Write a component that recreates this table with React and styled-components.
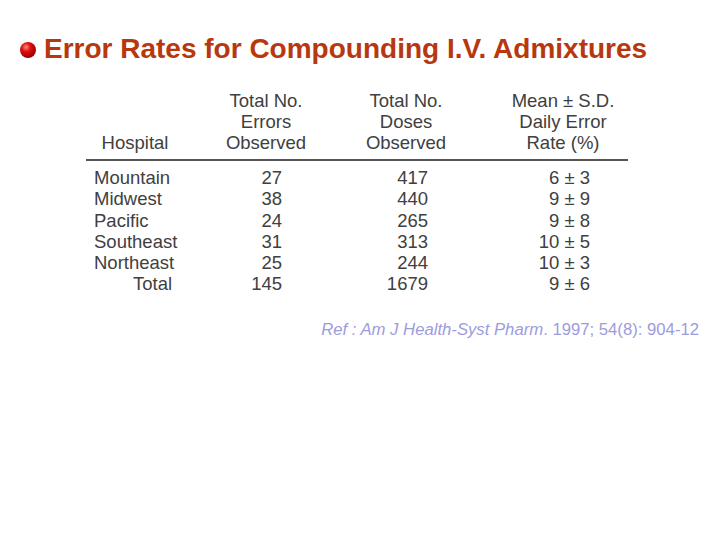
import React from "react";
import styled, { createGlobalStyle } from "styled-components";

const Global = createGlobalStyle`
  html, body { margin: 0; padding: 0; background: #ffffff; }
  body { width: 720px; height: 540px; overflow: hidden; font-family: "Liberation Sans", Arial, sans-serif; }
`;

const Slide = styled.div`
  width: 720px;
  height: 540px;
  box-sizing: border-box;
  padding: 32px 0 0 0;
  display: flex;
  flex-direction: column;
`;

const TitleRow = styled.div`
  display: flex;
  align-items: center;
  gap: 8px;
  padding-left: 20px;
`;

const Bullet = styled.span`
  display: inline-block;
  flex: none;
  width: 16px;
  height: 16px;
  border-radius: 50%;
  background: radial-gradient(circle at 38% 32%, #ff8a80 0%, #e01010 30%, #a00000 70%, #5a0000 100%);
  margin-top: 2px;
`;

const Title = styled.h1`
  margin: 0;
  font-family: "Liberation Sans", Arial, sans-serif;
  font-weight: bold;
  font-size: 28px;
  line-height: 34px;
  color: #b8380e;
  white-space: nowrap;
`;

const Table = styled.div`
  margin: 24px 0 0 86px;
  width: 542px;
  display: grid;
  grid-template-columns: 124px 112px 168px 138px;
  font-family: "Liberation Sans", Arial, sans-serif;
  font-size: 18.5px;
  color: #404040;
`;

const HeadCell = styled.div`
  display: flex;
  flex-direction: column;
  justify-content: flex-end;
  align-items: center;
  text-align: center;
  line-height: 21px;
  padding-bottom: 6px;
  padding-left: ${(p) => p.$pl || 0}px;
  padding-right: ${(p) => p.$pr || 0}px;
  border-bottom: 2px solid #555;
`;

const Cell = styled.div`
  line-height: 21.3px;
  text-align: ${(p) => p.$align || "right"};
  padding-right: ${(p) => p.$pr || 0}px;
  padding-left: ${(p) => p.$pl || 0}px;
  padding-top: ${(p) => (p.$first ? 6 : 0)}px;
  white-space: pre;
`;

const Ref = styled.div`
  margin-top: 25px;
  align-self: flex-end;
  padding-right: 21px;
  font-family: "Liberation Sans", Arial, sans-serif;
  font-size: 16.7px;
  color: #9c9cdc;
`;

const rows = [
  ["Mountain", "27", "417", "6 ± 3"],
  ["Midwest", "38", "440", "9 ± 9"],
  ["Pacific", "24", "265", "9 ± 8"],
  ["Southeast", "31", "313", "10 ± 5"],
  ["Northeast", "25", "244", "10 ± 3"],
  ["Total", "145", "1679", "9 ± 6"],
];

export default function App() {
  return (
    <>
      <Global />
      <Slide>
        <TitleRow>
          <Bullet />
          <Title>Error Rates for Compounding I.V. Admixtures</Title>
        </TitleRow>
        <Table>
          <HeadCell $pr={26}>Hospital</HeadCell>
          <HeadCell>
            <span>Total No.</span>
            <span>Errors</span>
            <span>Observed</span>
          </HeadCell>
          <HeadCell>
            <span>Total No.</span>
            <span>Doses</span>
            <span>Observed</span>
          </HeadCell>
          <HeadCell $pl={8}>
            <span>Mean ± S.D.</span>
            <span>Daily Error</span>
            <span>Rate (%)</span>
          </HeadCell>
          {rows.map((r, i) => (
            <React.Fragment key={r[0]}>
              <Cell $first={i === 0} $align="left" $pl={r[0] === "Total" ? 47 : 8}>{r[0]}</Cell>
              <Cell $first={i === 0} $pr={40}>{r[1]}</Cell>
              <Cell $first={i === 0} $pr={62}>{r[2]}</Cell>
              <Cell $first={i === 0} $pr={38}>{r[3]}</Cell>
            </React.Fragment>
          ))}
        </Table>
        <Ref>
          <i>Ref : Am J Health-Syst Pharm</i>. 1997; 54(8): 904-12
        </Ref>
      </Slide>
    </>
  );
}
